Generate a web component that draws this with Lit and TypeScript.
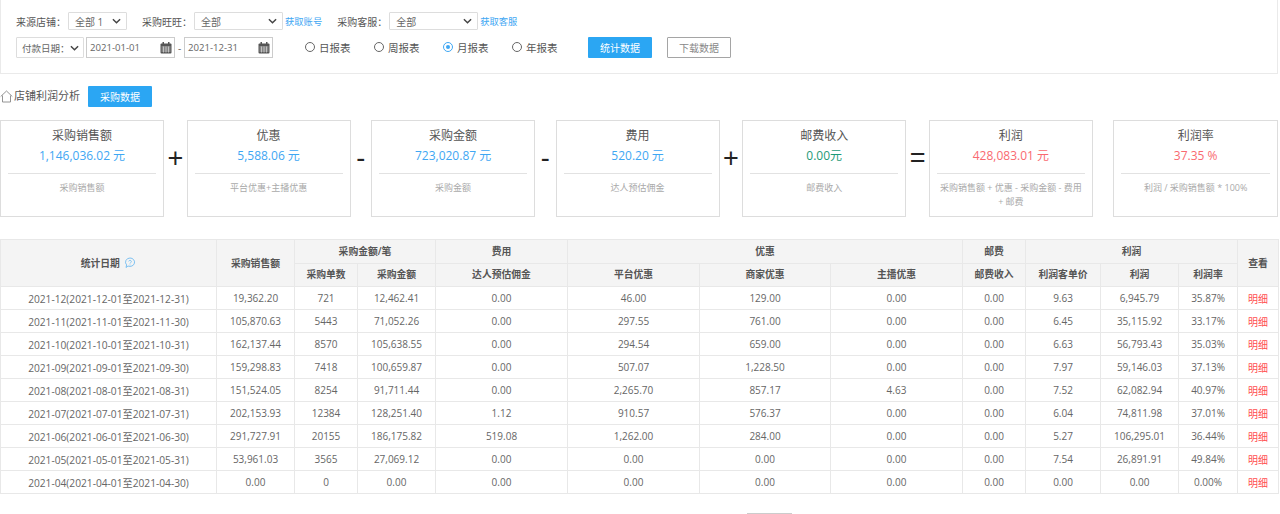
import { LitElement, html, css, svg } from "lit";
import { customElement } from "lit/decorators.js";

const rows = [
  ["2021-12(2021-12-01至2021-12-31)","19,362.20","721","12,462.41","0.00","46.00","129.00","0.00","0.00","9.63","6,945.79","35.87%"],
  ["2021-11(2021-11-01至2021-11-30)","105,870.63","5443","71,052.26","0.00","297.55","761.00","0.00","0.00","6.45","35,115.92","33.17%"],
  ["2021-10(2021-10-01至2021-10-31)","162,137.44","8570","105,638.55","0.00","294.54","659.00","0.00","0.00","6.63","56,793.43","35.03%"],
  ["2021-09(2021-09-01至2021-09-30)","159,298.83","7418","100,659.87","0.00","507.07","1,228.50","0.00","0.00","7.97","59,146.03","37.13%"],
  ["2021-08(2021-08-01至2021-08-31)","151,524.05","8254","91,711.44","0.00","2,265.70","857.17","4.63","0.00","7.52","62,082.94","40.97%"],
  ["2021-07(2021-07-01至2021-07-31)","202,153.93","12384","128,251.40","1.12","910.57","576.37","0.00","0.00","6.04","74,811.98","37.01%"],
  ["2021-06(2021-06-01至2021-06-30)","291,727.91","20155","186,175.82","519.08","1,262.00","284.00","0.00","0.00","5.27","106,295.01","36.44%"],
  ["2021-05(2021-05-01至2021-05-31)","53,961.03","3565","27,069.12","0.00","0.00","0.00","0.00","0.00","7.54","26,891.91","49.84%"],
  ["2021-04(2021-04-01至2021-04-30)","0.00","0","0.00","0.00","0.00","0.00","0.00","0.00","0.00","0.00","0.00%"],
];
const colWidths = [216,78,63,78,132,132,131,132,63,75,78,59,41];
const cards = [
  { t:"采购销售额", v:"1,146,036.02 元", d:"采购销售额", c:"blue", op:"+", o:"plus" },
  { t:"优惠", v:"5,588.06 元", d:"平台优惠+主播优惠", c:"blue", op:"-", o:"minus" },
  { t:"采购金额", v:"723,020.87 元", d:"采购金额", c:"blue", op:"-", o:"minus" },
  { t:"费用", v:"520.20 元", d:"达人预估佣金", c:"blue", op:"+", o:"plus" },
  { t:"邮费收入", v:"0.00元", d:"邮费收入", c:"green", op:"=", o:"eq" },
  { t:"利润", v:"428,083.01 元", d:"采购销售额 + 优惠 - 采购金额 - 费用 + 邮费", c:"red", op:"", o:"none" },
  { t:"利润率", v:"37.35 %", d:"利润 / 采购销售额 * 100%", c:"red", op:null, o:"" },
];
const calIcon = svg`<svg class="cal" viewBox="0 0 12 12" width="12" height="12"><rect x="0.5" y="1.5" width="11" height="10" rx="1" fill="#555"/><rect x="2.5" y="0" width="1.5" height="3" fill="#555"/><rect x="8" y="0" width="1.5" height="3" fill="#555"/><path d="M1.5 5h9M1.5 7h9M1.5 9h9M3.5 4.5v6M6 4.5v6M8.5 4.5v6" stroke="#ddd" stroke-width=".7"/></svg>`;
const chevron = svg`<svg class="chev" viewBox="0 0 10 6" width="9" height="6"><path d="M1 1l4 4 4-4" fill="none" stroke="#444" stroke-width="1.6"/></svg>`;

@customElement("app-root")
export class AppRoot extends LitElement {
  static styles = css`
    :host { display:block; height:514px; overflow:hidden; background:#fff; color:#555;
      font-family:"Open Sans","Noto Sans CJK SC",sans-serif; font-size:10px; }
    * { box-sizing:border-box; }
    .filter { width:1278px; height:74px; border:1px solid #eaeaea; border-top:0; padding:12px 15px 0; display:flex; flex-direction:column; gap:7px; }
    .line { display:flex; align-items:center; }
    .line1 { height:18px; }
    .line2 { height:21px; }
    .lbl { color:#555; white-space:nowrap; }
    .sel { display:flex; align-items:center; justify-content:space-between; border:1px solid #ddd; background:#fff; border-radius:1px; padding:0 5px 0 6px; color:#666; height:18px; white-space:nowrap; flex:none; }
    .chev { flex:none; }
    .line2 .sel { height:21px; }
    .s1 { width:59px; margin-left:2px; }
    .s2 { width:89px; margin-left:2px; }
    .s3 { width:89px; margin-left:2px; }
    .s4 { width:68px; padding-left:5px; font-size:9.5px; }
    .link { color:#3fa7f3; margin-left:2px; font-size:9.3px; white-space:nowrap; }
    .g1 { margin-left:15px; }
    .g2 { margin-left:15px; }
    .date { display:flex; align-items:center; justify-content:space-between; border:1px solid #ccc; width:89px; height:21px; padding:0 2px 0 3px; color:#666; font-size:9.6px; flex:none; }
    .d1 { margin-left:2px; }
    .sep { width:9px; text-align:center; color:#666; }
    .radios { display:flex; margin-left:32px; gap:0; }
    .radio { display:flex; align-items:center; gap:4px; color:#555; width:69px; white-space:nowrap; font-size:10.5px; margin-top:-1px; }
    .dot { width:10px; height:10px; border:1px solid #666; border-radius:50%; display:block; }
    .dot.on { border-color:#3fa7f3; position:relative; }
    .dot.on::after { content:""; position:absolute; left:2px; top:2px; width:4px; height:4px; border-radius:50%; background:#3fa7f3; }
    .btn { height:21px; width:64px; display:flex; align-items:center; justify-content:center; border-radius:1px; white-space:nowrap; flex:none; }
    .primary { background:#2ba6f3; color:#fff; }
    .outline { border:1px solid #a5a5a5; color:#888; margin-left:15px; }
    .stat { margin-left:7px; }
    .title { display:flex; align-items:center; height:21px; margin-top:12px; }
    .home { flex:none; margin-right:1px; }
    .title span { font-size:11px; line-height:15px; color:#555; white-space:nowrap; margin-top:-2px; }
    .title .btn { margin-left:8px; }
    .cards { display:flex; width:1278px; margin-top:13px; height:97px; }
    .card { flex:0 0 164px; min-width:0; border:1px solid #ddd; padding:7px 7px 0; text-align:center; }
    .card:last-child { flex:1 1 0; }
    .op { flex:none; font-size:27px; line-height:1; text-align:center; color:#222; padding-top:25px; font-family:"Liberation Sans",sans-serif; }
    .plus { width:22.6px; } .minus { width:20.5px; } .eq { width:22.7px; } .none { width:20.4px; }
    .ct { font-size:12px; color:#555; line-height:16px; }
    .cv { font-size:12px; line-height:17px; margin-top:3px; padding-bottom:9px; border-bottom:1px solid #e2e2e2; }
    .blue { color:#3fa7f3; } .green { color:#1e9a78; } .red { color:#f96a70; }
    .cd { font-size:9px; line-height:14px; color:#aaa; margin-top:7px; }
    table { margin-top:22px; width:1278px; border-collapse:collapse; table-layout:fixed; }
    th,td { border:1px solid #e8e8e8; text-align:center; padding:0; font-weight:normal; font-size:10px; white-space:nowrap; }
    th { background:#f4f4f4; color:#555; font-weight:600; height:23.5px; font-size:9.8px; padding-bottom:1px; }
    td { height:23px; color:#666; }
    td.dt { font-size:10.2px; }
    .more { color:#ff4d4f; }
    .q { vertical-align:-2px; margin-left:2px; }
    .pager { margin:19px 0 0 747px; width:45px; height:22px; border:1px solid #ccc; }
  `;

  renderFilter() {
    return html`<div class="filter">
      <div class="line line1">
        <span class="lbl">来源店铺：</span><div class="sel s1"><span>全部 1</span>${chevron}</div>
        <span class="lbl g1">采购旺旺：</span><div class="sel s2"><span>全部</span>${chevron}</div>
        <span class="link">获取账号</span>
        <span class="lbl g2">采购客服：</span><div class="sel s3"><span>全部</span>${chevron}</div>
        <span class="link">获取客服</span>
      </div>
      <div class="line line2">
        <div class="sel s4"><span>付款日期：</span>${chevron}</div>
        <div class="date d1"><span>2021-01-01</span>${calIcon}</div>
        <span class="sep">-</span>
        <div class="date"><span>2021-12-31</span>${calIcon}</div>
        <div class="radios">
          ${["日报表","周报表","月报表","年报表"].map((r,i)=>html`<label class="radio"><i class="dot ${i===2?"on":""}"></i>${r}</label>`)}
        </div>
        <div class="btn primary stat">统计数据</div>
        <div class="btn outline">下载数据</div>
      </div>
    </div>`;
  }

  renderTable() {
    return html`<table>
      <colgroup>${colWidths.map(w=>html`<col style="width:${w}px">`)}</colgroup>
      <thead>
        <tr>
          <th rowspan="2">统计日期 <svg class="q" viewBox="0 0 12 12" width="12" height="12"><path d="M6 1a4.6 4.2 0 1 1-2 8l-2 1.5.6-2.6A4.6 4.2 0 0 1 6 1z" fill="none" stroke="#5fb4f0" stroke-width=".8"/><path d="M4.6 4.4c.3-1.4 2.8-1.3 2.8.2 0 1-1.4 1-1.4 2M6 7.6v.7" fill="none" stroke="#5fb4f0" stroke-width=".7"/></svg></th>
          <th rowspan="2">采购销售额</th>
          <th colspan="2">采购金额/笔</th>
          <th>费用</th>
          <th colspan="3">优惠</th>
          <th>邮费</th>
          <th colspan="3">利润</th>
          <th rowspan="2">查看</th>
        </tr>
        <tr>
          ${["采购单数","采购金额","达人预估佣金","平台优惠","商家优惠","主播优惠","邮费收入","利润客单价","利润","利润率"].map(h=>html`<th>${h}</th>`)}
        </tr>
      </thead>
      <tbody>
        ${rows.map(r=>html`<tr>${r.map((c,i)=>html`<td class=${i===0?"dt":""}>${c}</td>`)}<td class="more">明细</td></tr>`)}
      </tbody>
    </table>`;
  }

  render() {
    return html`
      ${this.renderFilter()}
      <div class="title">
        <svg class="home" viewBox="0 0 13 13" width="13" height="13"><path d="M.7 6.5L6.5 1l5.8 5.5M2.5 5.5V12h8V5.5" fill="none" stroke="#888" stroke-width=".9"/></svg>
        <span>店铺利润分析</span>
        <div class="btn primary">采购数据</div>
      </div>
      <div class="cards">
        ${cards.map(c=>html`
          <div class="card">
            <div class="ct">${c.t}</div>
            <div class="cv ${c.c}">${c.v}</div>
            <div class="cd">${c.d}</div>
          </div>
          ${c.op===null?"":html`<div class="op ${c.o}">${c.op}</div>`}
        `)}
      </div>
      ${this.renderTable()}
      <div class="pager"></div>
    `;
  }
}
